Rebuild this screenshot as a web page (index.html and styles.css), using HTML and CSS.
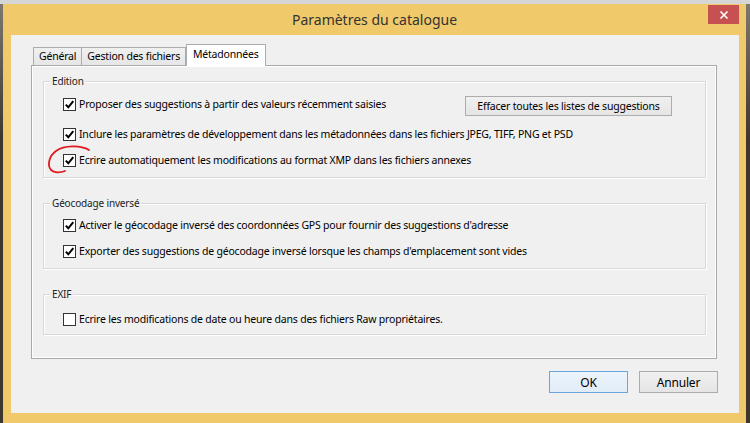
FILE: index.html
```html
<!DOCTYPE html>
<html lang="fr">
<head>
    <meta charset="UTF-8">
    <title>Paramètres du catalogue</title>
    <link rel="stylesheet" href="styles.css">
</head>
<body>
<div class="window">
    <div class="titlebar">
        <span></span>
        <span class="title">Paramètres du catalogue</span>
        <span class="close">
            <svg width="10" height="10" viewBox="0 0 10 10"><path d="M1.5 1.5 L8.5 8.5 M8.5 1.5 L1.5 8.5" stroke="#fff" stroke-width="1.6" fill="none"/></svg>
        </span>
    </div>
    <div class="client">
        <div class="tabs">
            <div class="tab">Général</div>
            <div class="tab">Gestion des fichiers</div>
            <div class="tab active">Métadonnées</div>
        </div>
        <div class="panel">
            <div class="group group_edition">
                <div class="legend">Edition</div>
                <div class="row">
                    <span class="box"><svg width="11" height="11" viewBox="0 0 11 11"><path d="M1.8 5.6 L4.3 8.3 L9.3 2.2" stroke="#000" stroke-width="2" fill="none"/></svg></span>
                    <span class="label">Proposer des suggestions à partir des valeurs récemment saisies</span>
                    <button class="btn btn_clear">Effacer toutes les listes de suggestions</button>
                </div>
                <div class="row row_wide">
                    <span class="box"><svg width="11" height="11" viewBox="0 0 11 11"><path d="M1.8 5.6 L4.3 8.3 L9.3 2.2" stroke="#000" stroke-width="2" fill="none"/></svg></span>
                    <span class="label">Inclure les paramètres de développement dans les métadonnées dans les fichiers JPEG, TIFF, PNG et PSD</span>
                </div>
                <div class="row">
                    <span class="box"><svg width="11" height="11" viewBox="0 0 11 11"><path d="M1.8 5.6 L4.3 8.3 L9.3 2.2" stroke="#000" stroke-width="2" fill="none"/></svg></span>
                    <span class="label">Ecrire automatiquement les modifications au format XMP dans les fichiers annexes</span>
                </div>
            </div>

            <div class="group group_geo">
                <div class="legend">Géocodage inversé</div>
                <div class="row row_tight">
                    <span class="box"><svg width="11" height="11" viewBox="0 0 11 11"><path d="M1.8 5.6 L4.3 8.3 L9.3 2.2" stroke="#000" stroke-width="2" fill="none"/></svg></span>
                    <span class="label">Activer le géocodage inversé des coordonnées GPS pour fournir des suggestions d'adresse</span>
                </div>
                <div class="row">
                    <span class="box"><svg width="11" height="11" viewBox="0 0 11 11"><path d="M1.8 5.6 L4.3 8.3 L9.3 2.2" stroke="#000" stroke-width="2" fill="none"/></svg></span>
                    <span class="label">Exporter des suggestions de géocodage inversé lorsque les champs d'emplacement sont vides</span>
                </div>
            </div>

            <div class="group group_exif">
                <div class="legend">EXIF</div>
                <div class="row row_exif">
                    <span class="box"></span>
                    <span class="label">Ecrire les modifications de date ou heure dans des fichiers Raw propriétaires.</span>
                </div>
            </div>
        </div>
        <div class="footer">
            <button class="btn btn_ok">OK</button>
            <button class="btn btn_cancel">Annuler</button>
        </div>
    </div>
</div>
<!-- annotation au stylo rouge -->
<svg class="mark" width="50" height="34" viewBox="0 0 50 34">
    <path d="M45 8 C37 3 20 3 12 9 C5 14 3 23 7 28 C10 31 16 31 21 29" stroke="#e01a1e" stroke-width="1.8" fill="none" stroke-linecap="round"/>
</svg>
</body>
</html>
```

FILE: styles.css
```css
* {
    margin: 0;
    padding: 0;
    box-sizing: border-box;
}

body {
    width: 750px;
    height: 423px;
    overflow: hidden;
    background: linear-gradient(#d6d6d6 0, #d6d6d6 4px, #7d776e 4px, #3d362c 140px);
    font-family: "Noto Sans", "Segoe UI", sans-serif;
    font-size: 10.5px;
    letter-spacing: -0.2px;
    color: #000;
}

.window {
    margin: 4px 4px 0 3px;
    width: 743px;
    height: 419px;
    background: #f0c96a;
    padding: 0 7px 10px 8px;
    display: flex;
    flex-direction: column;
}

.titlebar {
    height: 31px;
    margin: 0 -7px 0 -8px;
    display: grid;
    grid-template-columns: 1fr auto 1fr;
    align-items: center;
}

.title {
    font-size: 14px;
    letter-spacing: 0;
    color: #333;
    padding-bottom: 1px;
}

.close {
    justify-self: end;
    align-self: start;
    width: 31px;
    height: 19px;
    margin: 1px 7px 0 0;
    background: #c75050;
    display: flex;
    align-items: center;
    justify-content: center;
}

.client {
    flex: 1;
    background: #f0f0f0;
    padding-top: 9px;
}

/* onglets */
.tabs {
    display: flex;
    align-items: flex-end;
    height: 22px;
    margin-left: 22px;
    position: relative;
    z-index: 1;
}

.tab {
    height: 18px;
    margin-bottom: 1px;
    padding: 0 5px;
    line-height: 17px;
    border: 1px solid #acacac;
    border-bottom: none;
    background: linear-gradient(#f0f0f0, #e6e6e6);
}

.tab + .tab {
    border-left: none;
}

.tab.active {
    height: 22px;
    margin-bottom: 0;
    padding: 0 6px;
    line-height: 19px;
    background: #fff;
    border-left: 1px solid #acacac;
}

.panel {
    margin: -1px 22px 0 20px;
    height: 294px;
    border: 1px solid #a9a9a9;
    background: #f0f0f0;
    box-shadow: inset 0 0 0 1px #fff;
    padding: 0 10px 0 11px;
}

/* groupes */
.group {
    border: 1px solid #d8d8d8;
    box-shadow: inset 1px 1px 0 #fff, 1px 1px 0 #fff;
    padding: 0 0 7px 19px;
    margin-top: 25px;
}

.group_edition {
    margin-top: 15px;
}

.group_exif {
    padding-bottom: 5px;
}

.legend {
    width: fit-content;
    margin: -8px 0 0 -13px;
    padding: 0 2px;
    line-height: 14px;
    font-size: 10px;
    letter-spacing: -0.15px;
    color: #222;
    background: #f0f0f0;
}

.row {
    display: flex;
    align-items: center;
    height: 20px;
    margin-top: 6px;
}

.row_wide {
    margin-top: 10px;
}

.row_tight {
    margin-top: 5px;
}

.row_exif {
    margin-top: 8px;
}

.box {
    flex: none;
    width: 13px;
    height: 13px;
    margin-right: 3px;
    border: 1px solid #333;
    background: #fff;
    display: flex;
    align-items: center;
    justify-content: center;
}

.label {
    white-space: nowrap;
}

/* boutons */
.btn {
    font-family: inherit;
    font-size: 10.5px;
    letter-spacing: inherit;
    color: #000;
    border: 1px solid #acacac;
    background: linear-gradient(#f0f0f0, #e5e5e5);
}

.btn_clear {
    width: 207px;
    height: 20px;
    margin: 4px 33px 0 auto;
}

.footer {
    display: flex;
    justify-content: flex-end;
    gap: 11px;
    margin-top: 12px;
    padding-right: 21px;
}

.btn_ok, .btn_cancel {
    width: 79px;
    height: 22px;
    font-size: 12px;
}

.btn_ok {
    border-color: #6aa6dc;
    background: linear-gradient(#ecf4fc, #e1ecf7);
}

.mark {
    position: absolute;
    left: 44px;
    top: 142px;
}
```
